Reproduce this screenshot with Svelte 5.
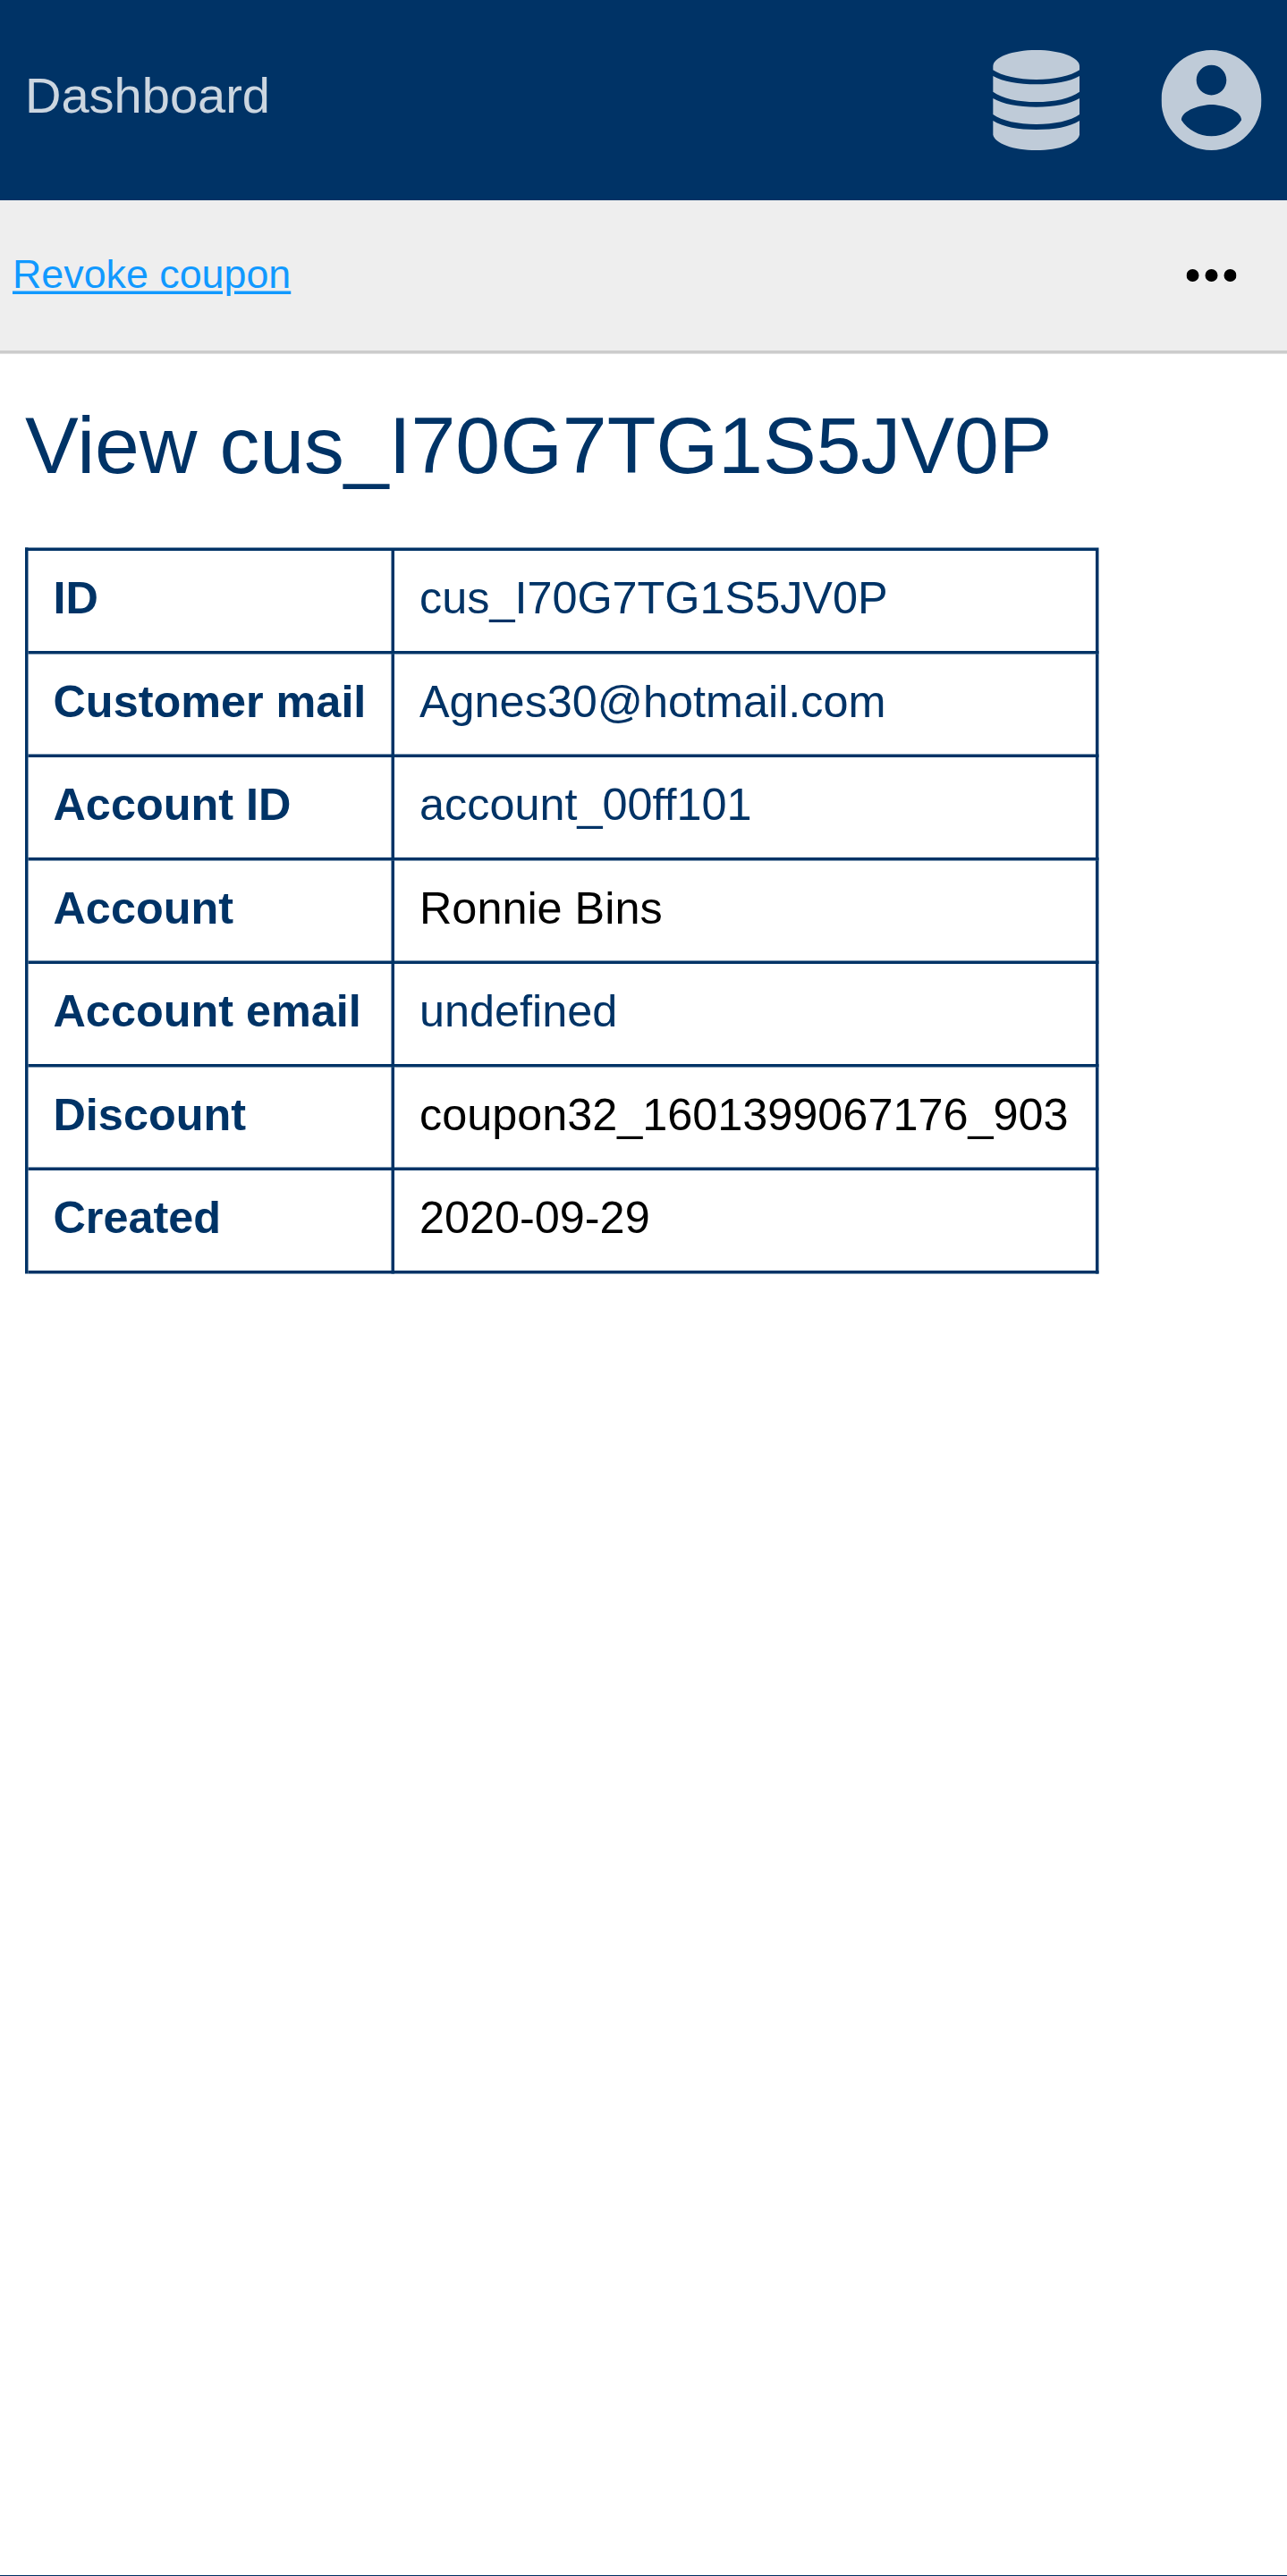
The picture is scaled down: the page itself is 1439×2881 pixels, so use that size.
<script>
  const rows = [
    { label: 'ID', value: 'cus_I70G7TG1S5JV0P', link: true },
    { label: 'Customer mail', value: 'Agnes30@hotmail.com', link: true },
    { label: 'Account ID', value: 'account_00ff101', link: true },
    { label: 'Account', value: 'Ronnie Bins', link: false },
    { label: 'Account email', value: 'undefined', link: true },
    { label: 'Discount', value: 'coupon32_1601399067176_903', link: false },
    { label: 'Created', value: '2020-09-29', link: false },
  ];
</script>

<div class="viewport">
  <div class="page">
    <header>
      <span class="brand">Dashboard</span>
      <nav>
        <svg class="database" viewBox="-2.5 0 294 336" aria-label="Database">
          <path d="M145 0C225 0 290 24 290 54V67C261 87 205 99 145 99S29 87 0 67V54C0 24 65 0 145 0Z" />
          <path d="M0 87C34 106 85 115 145 115S256 106 290 87V140C261 162 205 174 145 174S29 162 0 140Z" />
          <path d="M0 162C34 182 85 191 145 191S256 182 290 162V216C261 237 205 249 145 249S29 237 0 216Z" />
          <path d="M0 237C34 258 85 267 145 267S256 258 290 237V284C284 313 222 336 145 336S6 313 0 284Z" />
        </svg>
        <svg class="account" viewBox="2 2 20 20" aria-label="Account">
          <path d="M12 2C6.48 2 2 6.48 2 12s4.48 10 10 10 10-4.48 10-10S17.52 2 12 2zm0 3c1.66 0 3 1.34 3 3s-1.34 3-3 3-3-1.34-3-3 1.34-3 3-3zm0 14.2c-2.5 0-4.71-1.28-6-3.22.03-1.99 4-3.08 6-3.08 1.99 0 5.97 1.09 6 3.08-1.29 1.94-3.5 3.22-6 3.22z" />
        </svg>
      </nav>
    </header>
    <div class="toolbar">
      <a href="#revoke">Revoke coupon</a>
      <svg class="more" viewBox="0 0 16 4" aria-label="More">
        <circle cx="2" cy="2" r="2" />
        <circle cx="8" cy="2" r="2" />
        <circle cx="14" cy="2" r="2" />
      </svg>
    </div>
    <main>
      <h1>View cus_I70G7TG1S5JV0P</h1>
      <table>
        <tbody>
          {#each rows as row}
            <tr>
              <th>{row.label}</th>
              <td class:link={row.link}>{row.value}</td>
            </tr>
          {/each}
        </tbody>
      </table>
    </main>
  </div>
</div>

<style>
  :global(body) {
    background: #003366;
  }
  .viewport {
    height: 2880px;
    overflow: hidden;
    background: #fff;
  }
  /* The 412px-wide mobile layout is shown at 3.5x. */
  .page {
    width: 412px;
    transform: scale(3.5);
    transform-origin: 0 0;
    font-family: 'Liberation Sans', Arial, sans-serif;
    color: #000;
  }
  header {
    display: flex;
    justify-content: space-between;
    align-items: center;
    box-sizing: border-box;
    height: 64px;
    padding: 0 9px 0 8px;
    background: #003366;
  }
  .brand {
    font-size: 16px;
    line-height: 18px;
    padding-bottom: 3px;
    color: rgba(255, 255, 255, 0.8);
  }
  nav {
    display: flex;
    align-items: center;
    gap: 26px;
  }
  nav svg {
    display: block;
    height: 32px;
    fill: rgba(255, 255, 255, 0.75);
  }
  .database {
    width: 28px;
  }
  .account {
    width: 32px;
  }
  .toolbar {
    display: flex;
    justify-content: space-between;
    align-items: center;
    box-sizing: border-box;
    height: 49px;
    padding: 0 17px 0 4px;
    border-bottom: 1px solid #ccc;
    background: #eee;
  }
  .toolbar a {
    font-size: 12.8px;
    line-height: 16px;
    color: #1199ff;
  }
  .more {
    width: 16px;
    height: 4px;
  }
  main {
    padding: 15px 8px 0;
  }
  h1 {
    margin: 0 0 18px;
    font-size: 25.6px;
    font-weight: 400;
    line-height: 29px;
    white-space: nowrap;
    color: #003366;
  }
  table {
    table-layout: fixed;
    width: 343px;
    border-spacing: 0;
    border: solid #003366;
    border-width: 1px 0 0 1px;
  }
  th,
  td {
    box-sizing: border-box;
    height: 33px;
    padding: 0 8px 2px;
    border: solid #003366;
    border-width: 0 1px 1px 0;
    font-size: 14.4px;
    line-height: 16px;
    text-align: left;
    white-space: nowrap;
  }
  th {
    width: 117px;
    color: #003366;
  }
  .link {
    color: #003366;
  }
</style>
